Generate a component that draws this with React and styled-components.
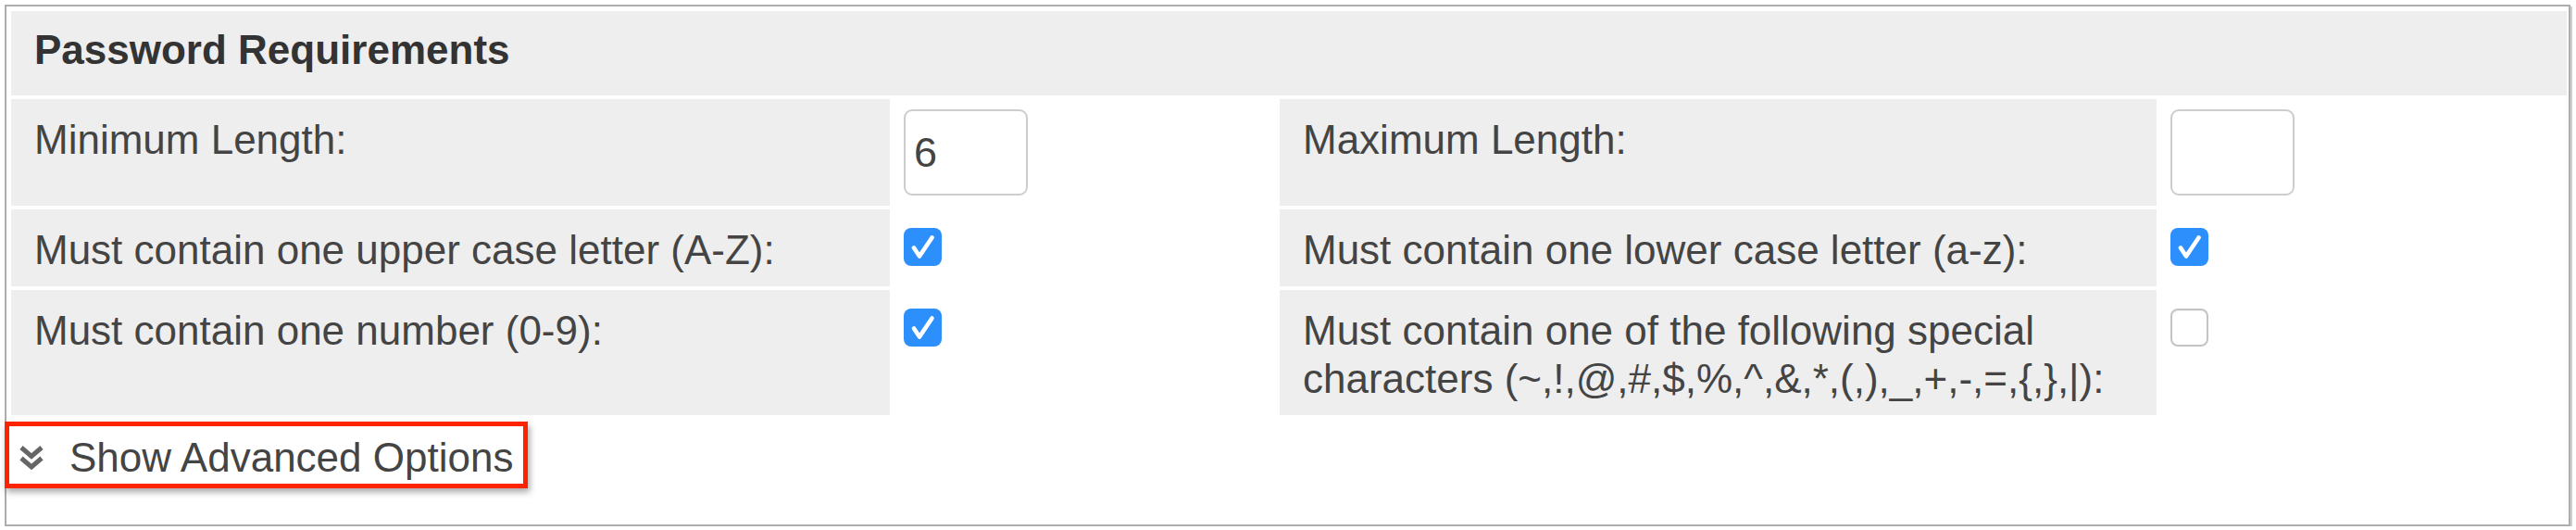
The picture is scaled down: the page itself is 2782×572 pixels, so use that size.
import styled, { createGlobalStyle } from "styled-components";

const GlobalStyle = createGlobalStyle`
  body {
    margin: 0;
    background: #fff;
    font-family: "Liberation Sans", Arial, Helvetica, sans-serif;
  }
`;

const Frame = styled.div`
  box-sizing: border-box;
  width: 2771px;
  margin: 5px 0 0 5px;
  padding: 5px 2px 39px 5px;
  border: 2px solid #adadad;
  box-shadow: 2px 2px 0 #cfcfcf;
  background: #fff;
`;

const Table = styled.div`
  display: grid;
  grid-template-columns: 949fr 413fr 947fr 439fr;
  column-gap: 4px;
  row-gap: 4px;
`;

const Header = styled.div`
  grid-column: 1 / -1;
  background: #eeeeee;
  padding: 16px 25px 23px;
  font-size: 44px;
  line-height: 52px;
  font-weight: bold;
  color: #333;
`;

const Label = styled.div`
  background: #eeeeee;
  padding: 18px 25px 13px 25px;
  font-size: 44px;
  line-height: 52px;
  color: #444;
`;

const Value = styled.div`
  padding: 11px;
`;

const NumberInput = styled.input`
  box-sizing: border-box;
  display: block;
  width: 134px;
  height: 93px;
  padding: 0 9px;
  border: 2px solid #cdcdcd;
  border-radius: 9px;
  font-family: inherit;
  font-size: 45px;
  color: #444;
  background: #fff;
  outline: none;
`;

const Box = styled.span`
  box-sizing: border-box;
  display: block;
  width: 41px;
  height: 41px;
  margin-top: 9px;
  border-radius: 8px;
  background: ${(p) => (p.$checked ? "#2d8ffc" : "#fff")};
  border: ${(p) => (p.$checked ? "none" : "2px solid #c4c4c4")};
  box-shadow: ${(p) =>
    p.$checked ? "none" : "inset 0 1px 1px rgba(0,0,0,0.06)"};

  svg {
    display: block;
  }
`;

const Checkbox = ({ checked }) => (
  <Box role="checkbox" aria-checked={checked} $checked={checked}>
    {checked && (
      <svg width="41" height="41" viewBox="0 0 41 41">
        <path
          d="M11 21.5 L17 30.5 L30.5 10.5"
          fill="none"
          stroke="#fff"
          strokeWidth="4.6"
          strokeLinecap="round"
          strokeLinejoin="round"
        />
      </svg>
    )}
  </Box>
);

const AdvancedLink = styled.a`
  display: inline-flex;
  align-items: center;
  gap: 27px;
  margin: 7px 0 0 -7px;
  padding: 8px 11px 2px 10px;
  border: 5px solid #ff2400;
  box-shadow: 2px 4px 7px rgba(0, 0, 0, 0.35);
  font-size: 44px;
  line-height: 52px;
  color: #444;
  text-decoration: none;
  cursor: pointer;
`;

const DoubleChevron = () => (
  <svg width="28" height="30" viewBox="0 0 28 30">
    <path
      d="M3 4 L14 13.5 L25 4 M3 15.5 L14 25 L25 15.5"
      fill="none"
      stroke="#666"
      strokeWidth="5"
      strokeLinejoin="miter"
    />
  </svg>
);

export default function App() {
  return (
    <>
      <GlobalStyle />
      <Frame>
        <Table>
          <Header>Password Requirements</Header>

          <Label>Minimum Length:</Label>
          <Value>
            <NumberInput type="text" defaultValue="6" />
          </Value>
          <Label>Maximum Length:</Label>
          <Value>
            <NumberInput type="text" defaultValue="" />
          </Value>

          <Label>Must contain one upper case letter (A-Z):</Label>
          <Value>
            <Checkbox checked />
          </Value>
          <Label>Must contain one lower case letter (a-z):</Label>
          <Value>
            <Checkbox checked />
          </Value>

          <Label>Must contain one number (0-9):</Label>
          <Value>
            <Checkbox checked />
          </Value>
          <Label>
            Must contain one of the following special
            <br />
            characters (~,!,@,#,$,%,^,&amp;,*,(,),_,+,-,=,{"{"},{"}"},|):
          </Label>
          <Value>
            <Checkbox checked={false} />
          </Value>
        </Table>

        <AdvancedLink>
          <DoubleChevron />
          Show Advanced Options
        </AdvancedLink>
      </Frame>
    </>
  );
}
